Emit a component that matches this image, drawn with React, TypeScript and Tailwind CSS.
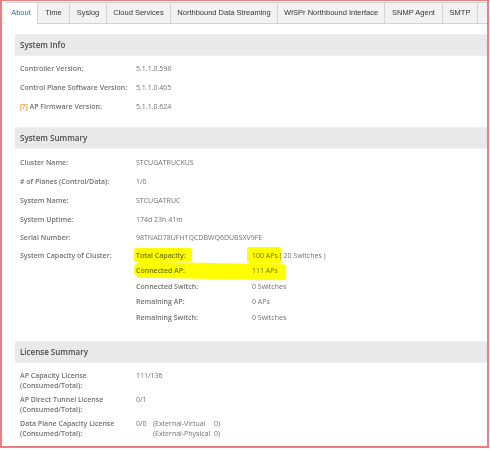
import React from 'react';

const tabs = [
  { label: 'About', w: 'w-[33px]', active: true },
  { label: 'Time', w: 'w-[32px]' },
  { label: 'Syslog', w: 'w-[37px]' },
  { label: 'Cloud Services', w: 'w-[64px]' },
  { label: 'Northbound Data Streaming', w: 'w-[107px]' },
  { label: 'WISPr Northbound Interface', w: 'w-[107px]' },
  { label: 'SNMP Agent', w: 'w-[58px]' },
  { label: 'SMTP', w: 'w-[35px]' },
  { label: 'FTP', w: 'w-[40px]' },
];

function SectionBar({ title }: { title: string }) {
  return (
    <div className="h-[22px] bg-[#e9e9e9] border-y border-[#efefef] flex items-center pl-[5px] text-[8px] font-semibold text-[#4a4a4a]">
      {title}
    </div>
  );
}

function Row({ label, value, h = 'h-[19px]' }: { label: React.ReactNode; value: React.ReactNode; h?: string }) {
  return (
    <div className={`flex items-center pl-[5px] ${h}`}>
      <div className="w-[116px] shrink-0 font-semibold text-[#707070]">{label}</div>
      <div className="text-[#707070]">{value}</div>
    </div>
  );
}

const summary = [
  ['Cluster Name:', 'STCUGATRUCKUS'],
  ['# of Planes (Control/Data):', '1/0'],
  ['System Name:', 'STCUGATRUC'],
  ['System Uptime:', '174d 23h 41m'],
  ['Serial Number:', '98TNAD78UFH1QCDBWQ6DUBSXV9FE'],
];

const capacity = [
  ['Total Capacity:', '100 APs ( 20 Switches )'],
  ['Connected AP:', '111 APs'],
  ['Connected Switch:', '0 Switches'],
  ['Remaining AP:', '0 APs'],
  ['Remaining Switch:', '0 Switches'],
];

export default function App() {
  return (
    <div className="w-[490px] h-[450px] bg-white">
      <div className="w-[489px] h-[448px] border-2 border-t border-[#ee7d7d] overflow-hidden font-['Open_Sans',sans-serif] text-[7px]">
        {/* Tabs */}
        <div className="flex h-[23px] pt-[1px] pl-[3px] border-b border-[#e2e2e2] font-['Liberation_Sans',Arial,sans-serif] text-[7.5px] text-[#333]">
          {tabs.map((t) => (
            <div
              key={t.label}
              className={`${t.w} shrink-0 h-[22px] flex items-center justify-center border border-l-0 border-[#d4d4d4] whitespace-nowrap overflow-hidden ${
                t.active ? 'bg-white text-[#2f6d9c] border-l border-b-white' : 'bg-[#f2f2f2]'
              }`}
            >
              {t.label}
            </div>
          ))}
        </div>

        <div className="ml-[13px] pt-[10px]">
          <SectionBar title="System Info" />
          <div className="pt-[4px]">
            <Row label="Controller Version:" value="5.1.1.0.598" />
            <Row label="Control Plane Software Version:" value="5.1.1.0.405" />
            <Row
              label={
                <span>
                  <span className="text-[#e08a1e]">[?]</span> AP Firmware Version:
                </span>
              }
              value="5.1.1.0.624"
            />
          </div>

          <div className="mt-[10px]">
            <SectionBar title="System Summary" />
          </div>
          <div className="pt-[5px]">
            {summary.map(([l, v]) => (
              <Row key={l} label={l} value={v} h="h-[18.8px]" />
            ))}
            <div className="flex pl-[5px] mt-[0px]">
              <div className="w-[116px] shrink-0 h-[15.6px] flex items-center font-semibold text-[#707070]">
                System Capacity of Cluster:
              </div>
              <div className="relative">
                {capacity.map(([l, v]) => (
                  <div key={l} className="flex items-center h-[15.6px]">
                    <div className="w-[116px] shrink-0 font-semibold text-[#707070]">{l}</div>
                    <div className="text-[#707070] whitespace-pre">{v}</div>
                  </div>
                ))}
                {/* marker highlights */}
                <div className="absolute left-[-2px] top-[0px] w-[58px] h-[14px] bg-[#ffff00] mix-blend-multiply rounded-[2px]" />
                <div className="absolute left-[111px] top-[-1px] w-[34px] h-[16px] bg-[#ffff00] mix-blend-multiply rounded-[2px]" />
                <div className="absolute left-[-2px] top-[15px] w-[152px] h-[16px] bg-[#ffff00] mix-blend-multiply rounded-l-[6px] rounded-r-[3px] skew-y-[1deg]" />
              </div>
            </div>
          </div>

          <div className="mt-[15px]">
            <SectionBar title="License Summary" />
          </div>
          <div className="pt-[8px] flex flex-col gap-[4px] leading-[10px]">
            <Row
              h="h-[20px] !items-start"
              label={<>AP Capacity License<br />(Consumed/Total):</>}
              value="111/136"
            />
            <Row
              h="h-[20px] !items-start"
              label={<>AP Direct Tunnel License<br />(Consumed/Total):</>}
              value="0/1"
            />
            <Row
              h="h-[20px] !items-start"
              label={<>Data Plane Capacity License<br />(Consumed/Total):</>}
              value={
                <div className="flex">
                  <div className="w-[17px]">0/0</div>
                  <div className="w-[61px]">
                    (External-Virtual
                    <br />
                    (External-Physical
                  </div>
                  <div>
                    0)
                    <br />
                    0)
                  </div>
                </div>
              }
            />
          </div>
        </div>
      </div>
    </div>
  );
}
